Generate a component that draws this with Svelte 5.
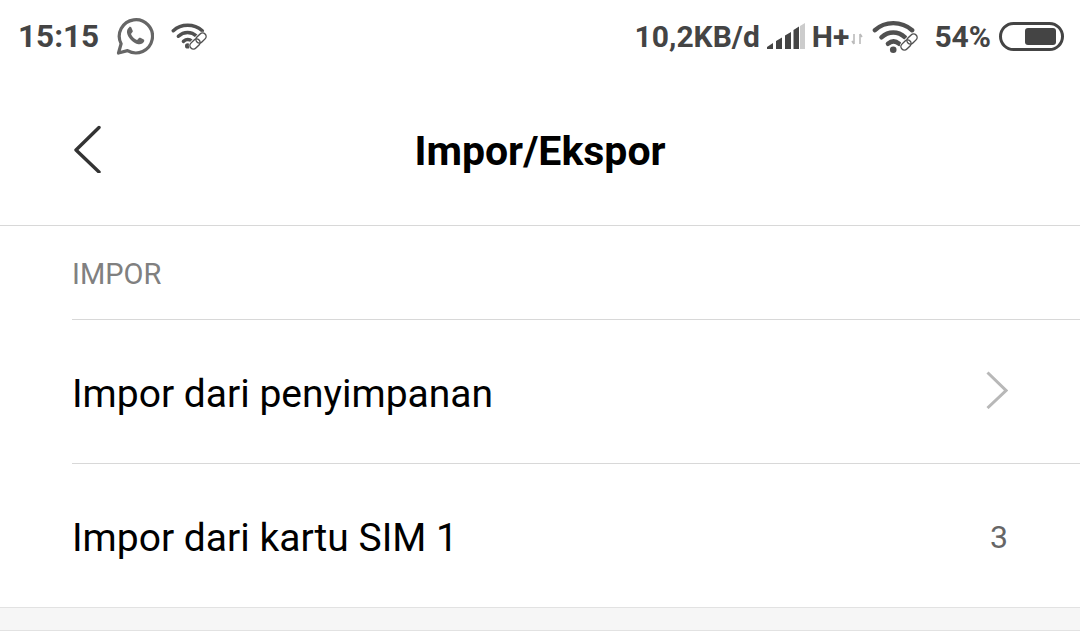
<script>
  const rows = [
    { label: "Impor dari penyimpanan", chevron: true },
    { label: "Impor dari kartu SIM 1", value: "3" }
  ];
</script>

{#snippet wifi(x, y, w)}
  <g transform="translate({x} {y})" fill="none" stroke="#505050" stroke-linecap="round">
    <path d="M1.5 8.5C10 .5 24 .5 33 8.5" stroke-width={w} />
    <path d="M7 14.500C13 9 21 9 27 14.500" stroke-width={w} />
    <path d="M12.500 20C15.500 17.500 19 17.500 22 20" stroke-width={w} />
    <circle cx="17" cy="25" r="2.800" fill="#505050" stroke="none" />
  </g>
{/snippet}

{#snippet link(x, y)}
  <g transform="translate({x} {y}) rotate(-45)" fill="none">
    <rect x="-11" y="-5" width="22" height="10" rx="5" fill="#fff" />
    <rect x="-10" y="-3.500" width="11.500" height="7" rx="3.500" stroke="#505050" stroke-width="1.400" />
    <rect x="-1.500" y="-3.500" width="11.500" height="7" rx="3.500" stroke="#505050" stroke-width="1.400" />
  </g>
{/snippet}

<div class="screen">
  <div class="status">
    <div class="left">
      <span class="time">15:15</span>
      <svg class="wa" width="38" height="38" viewBox="0 0 38 38">
        <path d="M2.5 36l2.6-9.2A16.6 16.6 0 1 1 11.500 33.600z" fill="none" stroke="#666" stroke-width="3.200" stroke-linejoin="round" />
        <path d="M13.600 10.200c-1.600.8-3 3-2.600 5.500.7 4.700 6.300 10.600 11.300 11.500 2.600.5 5-1 5.800-2.700.3-.8.2-1.500-.4-1.900l-3.300-1.800c-.6-.3-1.100-.2-1.500.3l-1.200 1.400c-.4.400-.8.500-1.300.3-2.300-1-4.300-3-5.200-5.200-.2-.5-.1-.9.300-1.300l1-1.200c.4-.5.400-.9.200-1.400l-1.500-3.400c-.4-.7-1.200-.9-2.600-.1z" fill="#666" />
      </svg>
      <svg class="wifi-small" width="38" height="30" viewBox="0 0 38 30">
        <g transform="translate(0 1) scale(.92)">{@render wifi(1, 1, 3.8)}</g>
        {@render link(27, 20)}
      </svg>
    </div>
    <div class="right">
      <span class="speed">10,2KB/d</span>
      <svg class="signal" width="38" height="26" viewBox="0 0 38 26">
        <path d="M0 26v-2l6-4v6zM9 26V18l6-3.500V26zM18 26V12.600l6-3.600V26zM26.500 26V7l5.500-3.500V26z" fill="#444" />
        <path d="M33 26V3l5-3v26z" fill="#ccc" />
      </svg>
      <span class="net">H+</span>
      <svg class="arrows" width="12" height="14" viewBox="0 0 12 14">
        <path d="M3 2v10M1 9l2 3M9 12V2M11 5L9 2" fill="none" stroke="#bbb" stroke-width="1.600" />
      </svg>
      <svg class="wifi" width="46" height="34" viewBox="0 0 46 34">
        <g transform="scale(1.180)">{@render wifi(1, 1, 3.8)}</g>
        {@render link(37, 23)}
      </svg>
      <span class="pct">54%</span>
      <div class="battery"><div class="level"></div></div>
    </div>
  </div>

  <header>
    <button class="back" aria-label="Kembali">
      <svg width="28" height="48" viewBox="0 0 28 48">
        <path d="M26 2.500L3 25l23 22" fill="none" stroke="#333" stroke-width="3.400" stroke-linecap="round" stroke-linejoin="round" />
      </svg>
    </button>
    <h1>Impor/Ekspor</h1>
  </header>

  <section>
    <div class="section-title">IMPOR</div>
    {#each rows as row}
      <div class="row">
        <span class="label">{row.label}</span>
        {#if row.chevron}
          <svg class="chevron" width="22" height="38" viewBox="0 0 22 38">
            <path d="M1.500 1.500L20 19.500 1.500 37" fill="none" stroke="#b8b8b8" stroke-width="3" />
          </svg>
        {:else}
          <span class="value">{row.value}</span>
        {/if}
      </div>
    {/each}
  </section>
  <div class="gap"></div>
</div>

<style>
  :global(body) {
    background: #fff;
  }
  .screen {
    width: 1080px;
    height: 635px;
    overflow: hidden;
    font-family: Roboto, sans-serif;
    color: #000;
    background: #fff;
  }
  .status {
    height: 72px;
    display: flex;
    align-items: center;
    justify-content: space-between;
    padding: 0 16px 0 18px;
    color: #444;
    font-weight: 700;
    font-size: 30px;
  }
  .left,
  .right {
    display: flex;
    align-items: center;
  }
  .time {
    font-size: 31.5px;
  }
  .wa {
    margin-left: 17px;
  }
  .wifi-small {
    margin-left: 17px;
  }
  .signal {
    margin-left: 7px;
  }
  .net {
    margin-left: 7px;
  }
  .arrows {
    margin: 6px 0 0 2px;
  }
  .wifi {
    margin-left: 9px;
  }
  .pct {
    margin-left: 16px;
  }
  .battery {
    width: 65px;
    height: 29px;
    margin-left: 8px;
    box-sizing: border-box;
    border: 3px solid #444;
    border-radius: 15px;
    display: flex;
    justify-content: flex-end;
    align-items: center;
    padding-right: 5px;
  }
  .level {
    width: 31px;
    height: 17px;
    background: #444;
    border-radius: 3px;
  }
  header {
    height: 152px;
    position: relative;
    display: flex;
    align-items: center;
    justify-content: center;
    border-bottom: 1px solid #d8d8d8;
    padding-bottom: 1px;
    box-sizing: content-box;
  }
  h1 {
    margin: 0;
    padding-top: 6px;
    font-size: 41px;
    font-weight: 700;
  }
  .back {
    position: absolute;
    left: 73px;
    top: 53px;
    padding: 0;
    border: 0;
    background: none;
    display: flex;
  }
  section {
    padding-left: 72px;
  }
  .section-title {
    height: 94px;
    box-sizing: border-box;
    padding-top: 31px;
    font-size: 29px;
    line-height: 34px;
    color: #808080;
    border-bottom: 1px solid #d8d8d8;
  }
  .row {
    height: 143px;
    display: flex;
    align-items: center;
    justify-content: space-between;
    padding-right: 72px;
    font-size: 39px;
    border-bottom: 1px solid #d8d8d8;
  }
  .row:last-child {
    border-bottom: 0;
  }
  .label {
    padding-top: 5px;
  }
  .chevron {
    margin-top: -3px;
  }
  .value {
    padding-top: 2px;
    font-size: 32px;
    color: #666;
  }
  .gap {
    height: 22px;
    background: #f6f6f6;
    border-top: 1px solid #e2e2e2;
    border-bottom: 1px solid #e2e2e2;
  }
</style>
